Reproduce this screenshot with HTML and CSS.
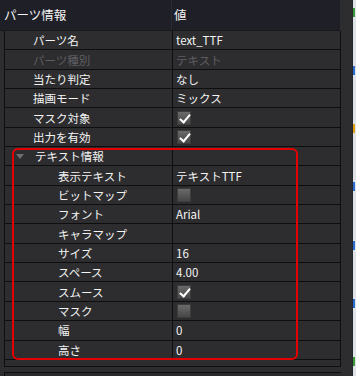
FILE: index.html
```html
<!DOCTYPE html>
<html lang="ja">
  <head>
    <meta charset="UTF-8" />
    <meta name="viewport" content="width=device-width, initial-scale=1.0" />
    <title>プロパティ</title>
    <link rel="stylesheet" href="styles.css">
  </head>
  <body>
    <div class="window">
      <div class="panel">
        <div class="grid">
          <div class="head">
            <div class="hname">パーツ情報</div>
            <div class="hval">値</div>
          </div>
          <div class="rows">
            <div class="row"><div class="name">パーツ名</div><div class="val">text_TTF</div></div>
            <div class="row off"><div class="name">パーツ種別</div><div class="val">テキスト</div></div>
            <div class="row"><div class="name">当たり判定</div><div class="val">なし</div></div>
            <div class="row"><div class="name">描画モード</div><div class="val">ミックス</div></div>
            <div class="row"><div class="name">マスク対象</div><div class="val"><span class="check on"></span></div></div>
            <div class="row"><div class="name">出力を有効</div><div class="val"><span class="check on"></span></div></div>
            <div class="row"><div class="name group"><span class="arrow"></span>テキスト情報</div><div class="val"></div></div>
            <div class="row"><div class="name sub">表示テキスト</div><div class="val">テキストTTF</div></div>
            <div class="row"><div class="name sub">ビットマップ</div><div class="val"><span class="check"></span></div></div>
            <div class="row"><div class="name sub">フォント</div><div class="val">Arial</div></div>
            <div class="row"><div class="name sub">キャラマップ</div><div class="val"></div></div>
            <div class="row"><div class="name sub">サイズ</div><div class="val">16</div></div>
            <div class="row"><div class="name sub">スペース</div><div class="val">4.00</div></div>
            <div class="row"><div class="name sub">スムース</div><div class="val"><span class="check on"></span></div></div>
            <div class="row"><div class="name sub">マスク</div><div class="val"><span class="check"></span></div></div>
            <div class="row"><div class="name sub">幅</div><div class="val">0</div></div>
            <div class="row"><div class="name sub">高さ</div><div class="val">0</div></div>
            <div class="tail"></div>
          </div>
          <div class="mark"></div>
        </div>
        <div class="lower"></div>
      </div>
      <div class="strip">
        <span class="dot green"></span>
        <span class="dot blue"></span>
        <span class="dot yellow"></span>
        <span class="dot blue"></span>
        <span class="dot blue"></span>
        <span class="dot blue"></span>
        <span class="dot green"></span>
      </div>
    </div>
  </body>
</html>
```

FILE: styles.css
```css
* {
  margin: 0;
  padding: 0;
  box-sizing: border-box;
}
body {
  width: 356px;
  height: 376px;
  overflow: hidden;
  background-color: #2d2d30;
  font-family: "Noto Sans CJK JP", "Noto Sans", sans-serif;
  font-size: 11.5px;
  color: #f4f4f4;
}
.window {
  display: flex;
  height: 376px;
}
.panel {
  width: 353px;
  border-right: 1px solid #26262a;
}
.grid {
  position: relative;
  width: 341px;
}
.head {
  display: flex;
  height: 31px;
  background-color: #1f1f27;
  border-bottom: 1px solid #1a1a1e;
  width: 340px;
  font-size: 12.5px;
}
.hname {
  width: 172px;
  padding-left: 4px;
  line-height: 30px;
  border-right: 1px solid #2a2a34;
}
.hval {
  padding-left: 2px;
  line-height: 30px;
}
.rows {
  margin-left: 4px;
  border-left: 1px solid #0e0e0e;
  border-right: 1px solid #0e0e0e;
  width: 337px;
}
.row {
  display: flex;
  height: 19.35px;
  border-bottom: 1px solid #0e0e0e;
  background-color: #2d2d2f;
}
.name {
  width: 168px;
  padding-left: 28px;
  border-right: 1px solid #0e0e0e;
  display: flex;
  align-items: center;
  white-space: nowrap;
}
.name.sub {
  padding-left: 53px;
}
.name.group {
  padding-left: 11px;
}
.arrow {
  width: 0;
  height: 0;
  margin-right: 11px;
  border-left: 4px solid transparent;
  border-right: 4px solid transparent;
  border-top: 5px solid #6e6e72;
}
.val {
  flex: 1;
  padding-left: 3px;
  display: flex;
  align-items: center;
  white-space: nowrap;
}
.off .name,
.off .val {
  color: #5e5e62;
}
.tail {
  height: 7px;
  border-bottom: 1px solid #0e0e0e;
}
.check {
  width: 14px;
  height: 14px;
  margin-left: 1px;
  background: linear-gradient(#6a6a6a, #474747);
  border: 1px solid #3c3c3c;
  position: relative;
}
.check.on::after {
  content: "";
  position: absolute;
  left: 4px;
  top: 0px;
  width: 4px;
  height: 9px;
  border-right: 2.5px solid #ffffff;
  border-bottom: 2.5px solid #ffffff;
  transform: rotate(40deg);
}
.mark {
  position: absolute;
  left: 12px;
  top: 148px;
  width: 286px;
  height: 212px;
  border: 2px solid #e50000;
  border-radius: 6px;
}
.lower {
  margin-top: 5px;
  margin-left: 4px;
  width: 337px;
  height: 10px;
  border-top: 1px solid #0e0e0e;
  border-left: 1px solid #0e0e0e;
  background-color: #2a2a2c;
}
.strip {
  flex: 1;
  background-color: #dfe4ea;
  display: flex;
  flex-direction: column;
  justify-content: space-between;
  padding: 8px 0 10px;
}
.dot {
  display: block;
  height: 9px;
  width: 2px;
}
.green {
  background-color: #3a9a3a;
}
.blue {
  background-color: #2a6fd0;
}
.yellow {
  background-color: #e0a010;
}
```
